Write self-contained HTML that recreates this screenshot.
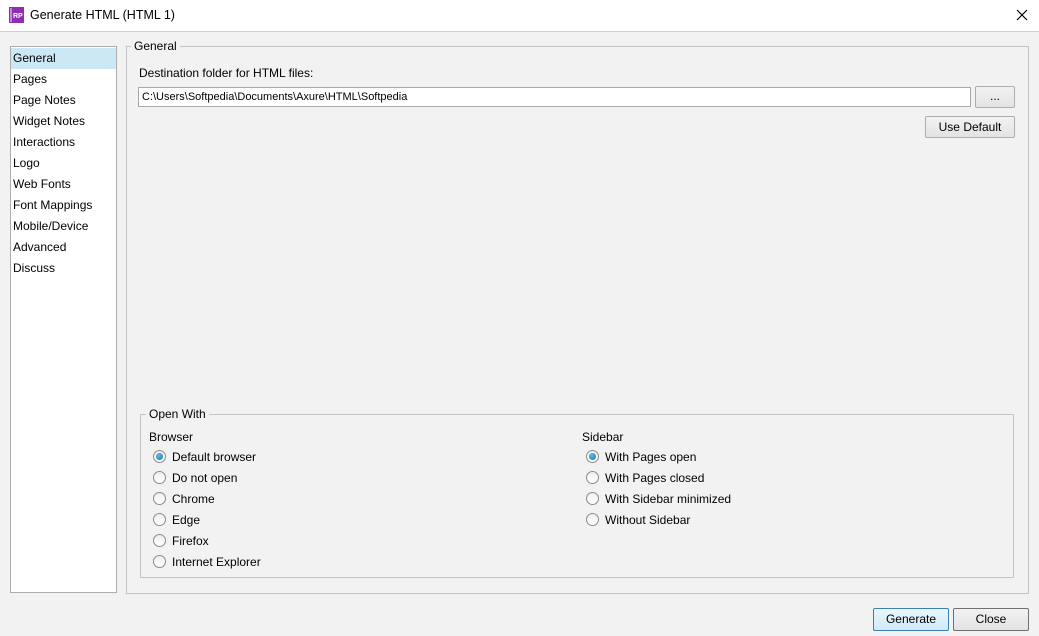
<!DOCTYPE html>
<html><head><style>
body{margin:0;width:1039px;height:636px;background:#f2f2f2;font-family:"Liberation Sans",sans-serif;font-size:12px;color:#000;position:relative;overflow:hidden}
.a{position:absolute;white-space:nowrap}
.title{left:0;top:0;width:1039px;height:31px;background:#fff;border-bottom:1px solid #cfcfcf}
.list{left:10px;top:46px;width:105px;height:545px;background:#fff;border:1px solid #acacac}
.item{position:absolute;left:0;width:105px;height:21px;line-height:21px;padding-left:2px;box-sizing:border-box;font-size:12px}
.grp{border:1px solid #c4c4c4;}
.lbl{background:#f2f2f2;padding:0 3px;font-size:12px}
.btn{border:1px solid #adadad;background:linear-gradient(#f2f2f2,#e3e3e3);border-radius:2px;text-align:center;box-sizing:border-box;font-size:12px}
.r{width:13px;height:13px;border:1px solid #8b8b8b;border-radius:50%;background:linear-gradient(#eee,#fff);box-sizing:border-box}
.r.on::after{content:"";position:absolute;left:2px;top:2px;width:7px;height:7px;border-radius:50%;background:radial-gradient(circle at 40% 35%,#5bc0ec,#1a6fa0)}
.t{font-size:12px}
</style></head><body>
<div class="a title"></div>
<div class="a" style="left:9px;top:7px;width:15px;height:16px;background:#8e2eb5"></div>
<div class="a" style="left:10px;top:8px;width:2px;height:14px;background:#c585e0"></div>
<div class="a" style="left:13px;top:13px;color:#fff;font-size:7px;font-weight:bold">RP</div>
<div class="a" style="left:30px;top:8px;font-size:12.5px">Generate HTML (HTML 1)</div>
<svg class="a" style="left:1016px;top:9px" width="12" height="12"><path d="M1 1L11 11M11 1L1 11" stroke="#000" stroke-width="1.2"/></svg>

<div class="a list">
<div class="item" style="top:1px;background:#cce8f4">General</div>
<div class="item" style="top:22px">Pages</div>
<div class="item" style="top:43px">Page Notes</div>
<div class="item" style="top:64px">Widget Notes</div>
<div class="item" style="top:85px">Interactions</div>
<div class="item" style="top:106px">Logo</div>
<div class="item" style="top:127px">Web Fonts</div>
<div class="item" style="top:148px">Font Mappings</div>
<div class="item" style="top:169px">Mobile/Device</div>
<div class="item" style="top:190px">Advanced</div>
<div class="item" style="top:211px">Discuss</div>
</div>

<div class="a grp" style="left:126px;top:46px;width:901px;height:546px"></div>
<div class="a lbl" style="left:131px;top:39px">General</div>
<div class="a t" style="left:139px;top:66px">Destination folder for HTML files:</div>
<div class="a" style="left:138px;top:87px;width:828px;height:18px;background:#fff;border:1px solid #a9a9a9;font-size:11px;line-height:18px;padding-left:3px;box-sizing:content-box">C:\Users\Softpedia\Documents\Axure\HTML\Softpedia</div>
<div class="a btn" style="left:975px;top:86px;width:40px;height:22px;line-height:18px">...</div>
<div class="a btn" style="left:925px;top:116px;width:90px;height:22px;line-height:20px">Use Default</div>

<div class="a grp" style="left:140px;top:414px;width:872px;height:162px"></div>
<div class="a lbl" style="left:146px;top:407px">Open With</div>
<div class="a t" style="left:149px;top:430px">Browser</div>
<div class="a t" style="left:582px;top:430px">Sidebar</div>

<div class="a r on" style="left:153px;top:450px"></div><div class="a t" style="left:172px;top:450px">Default browser</div>
<div class="a r" style="left:153px;top:471px"></div><div class="a t" style="left:172px;top:471px">Do not open</div>
<div class="a r" style="left:153px;top:492px"></div><div class="a t" style="left:172px;top:492px">Chrome</div>
<div class="a r" style="left:153px;top:513px"></div><div class="a t" style="left:172px;top:513px">Edge</div>
<div class="a r" style="left:153px;top:534px"></div><div class="a t" style="left:172px;top:534px">Firefox</div>
<div class="a r" style="left:153px;top:555px"></div><div class="a t" style="left:172px;top:555px">Internet Explorer</div>

<div class="a r on" style="left:586px;top:450px"></div><div class="a t" style="left:605px;top:450px">With Pages open</div>
<div class="a r" style="left:586px;top:471px"></div><div class="a t" style="left:605px;top:471px">With Pages closed</div>
<div class="a r" style="left:586px;top:492px"></div><div class="a t" style="left:605px;top:492px">With Sidebar minimized</div>
<div class="a r" style="left:586px;top:513px"></div><div class="a t" style="left:605px;top:513px">Without Sidebar</div>

<div class="a btn" style="left:873px;top:608px;width:76px;height:23px;line-height:21px;border-color:#3c7fb1;background:linear-gradient(#eaf6fd,#d0eaf8)">Generate</div>
<div class="a btn" style="left:953px;top:608px;width:76px;height:23px;line-height:21px;border-color:#707070">Close</div>
</body></html>
